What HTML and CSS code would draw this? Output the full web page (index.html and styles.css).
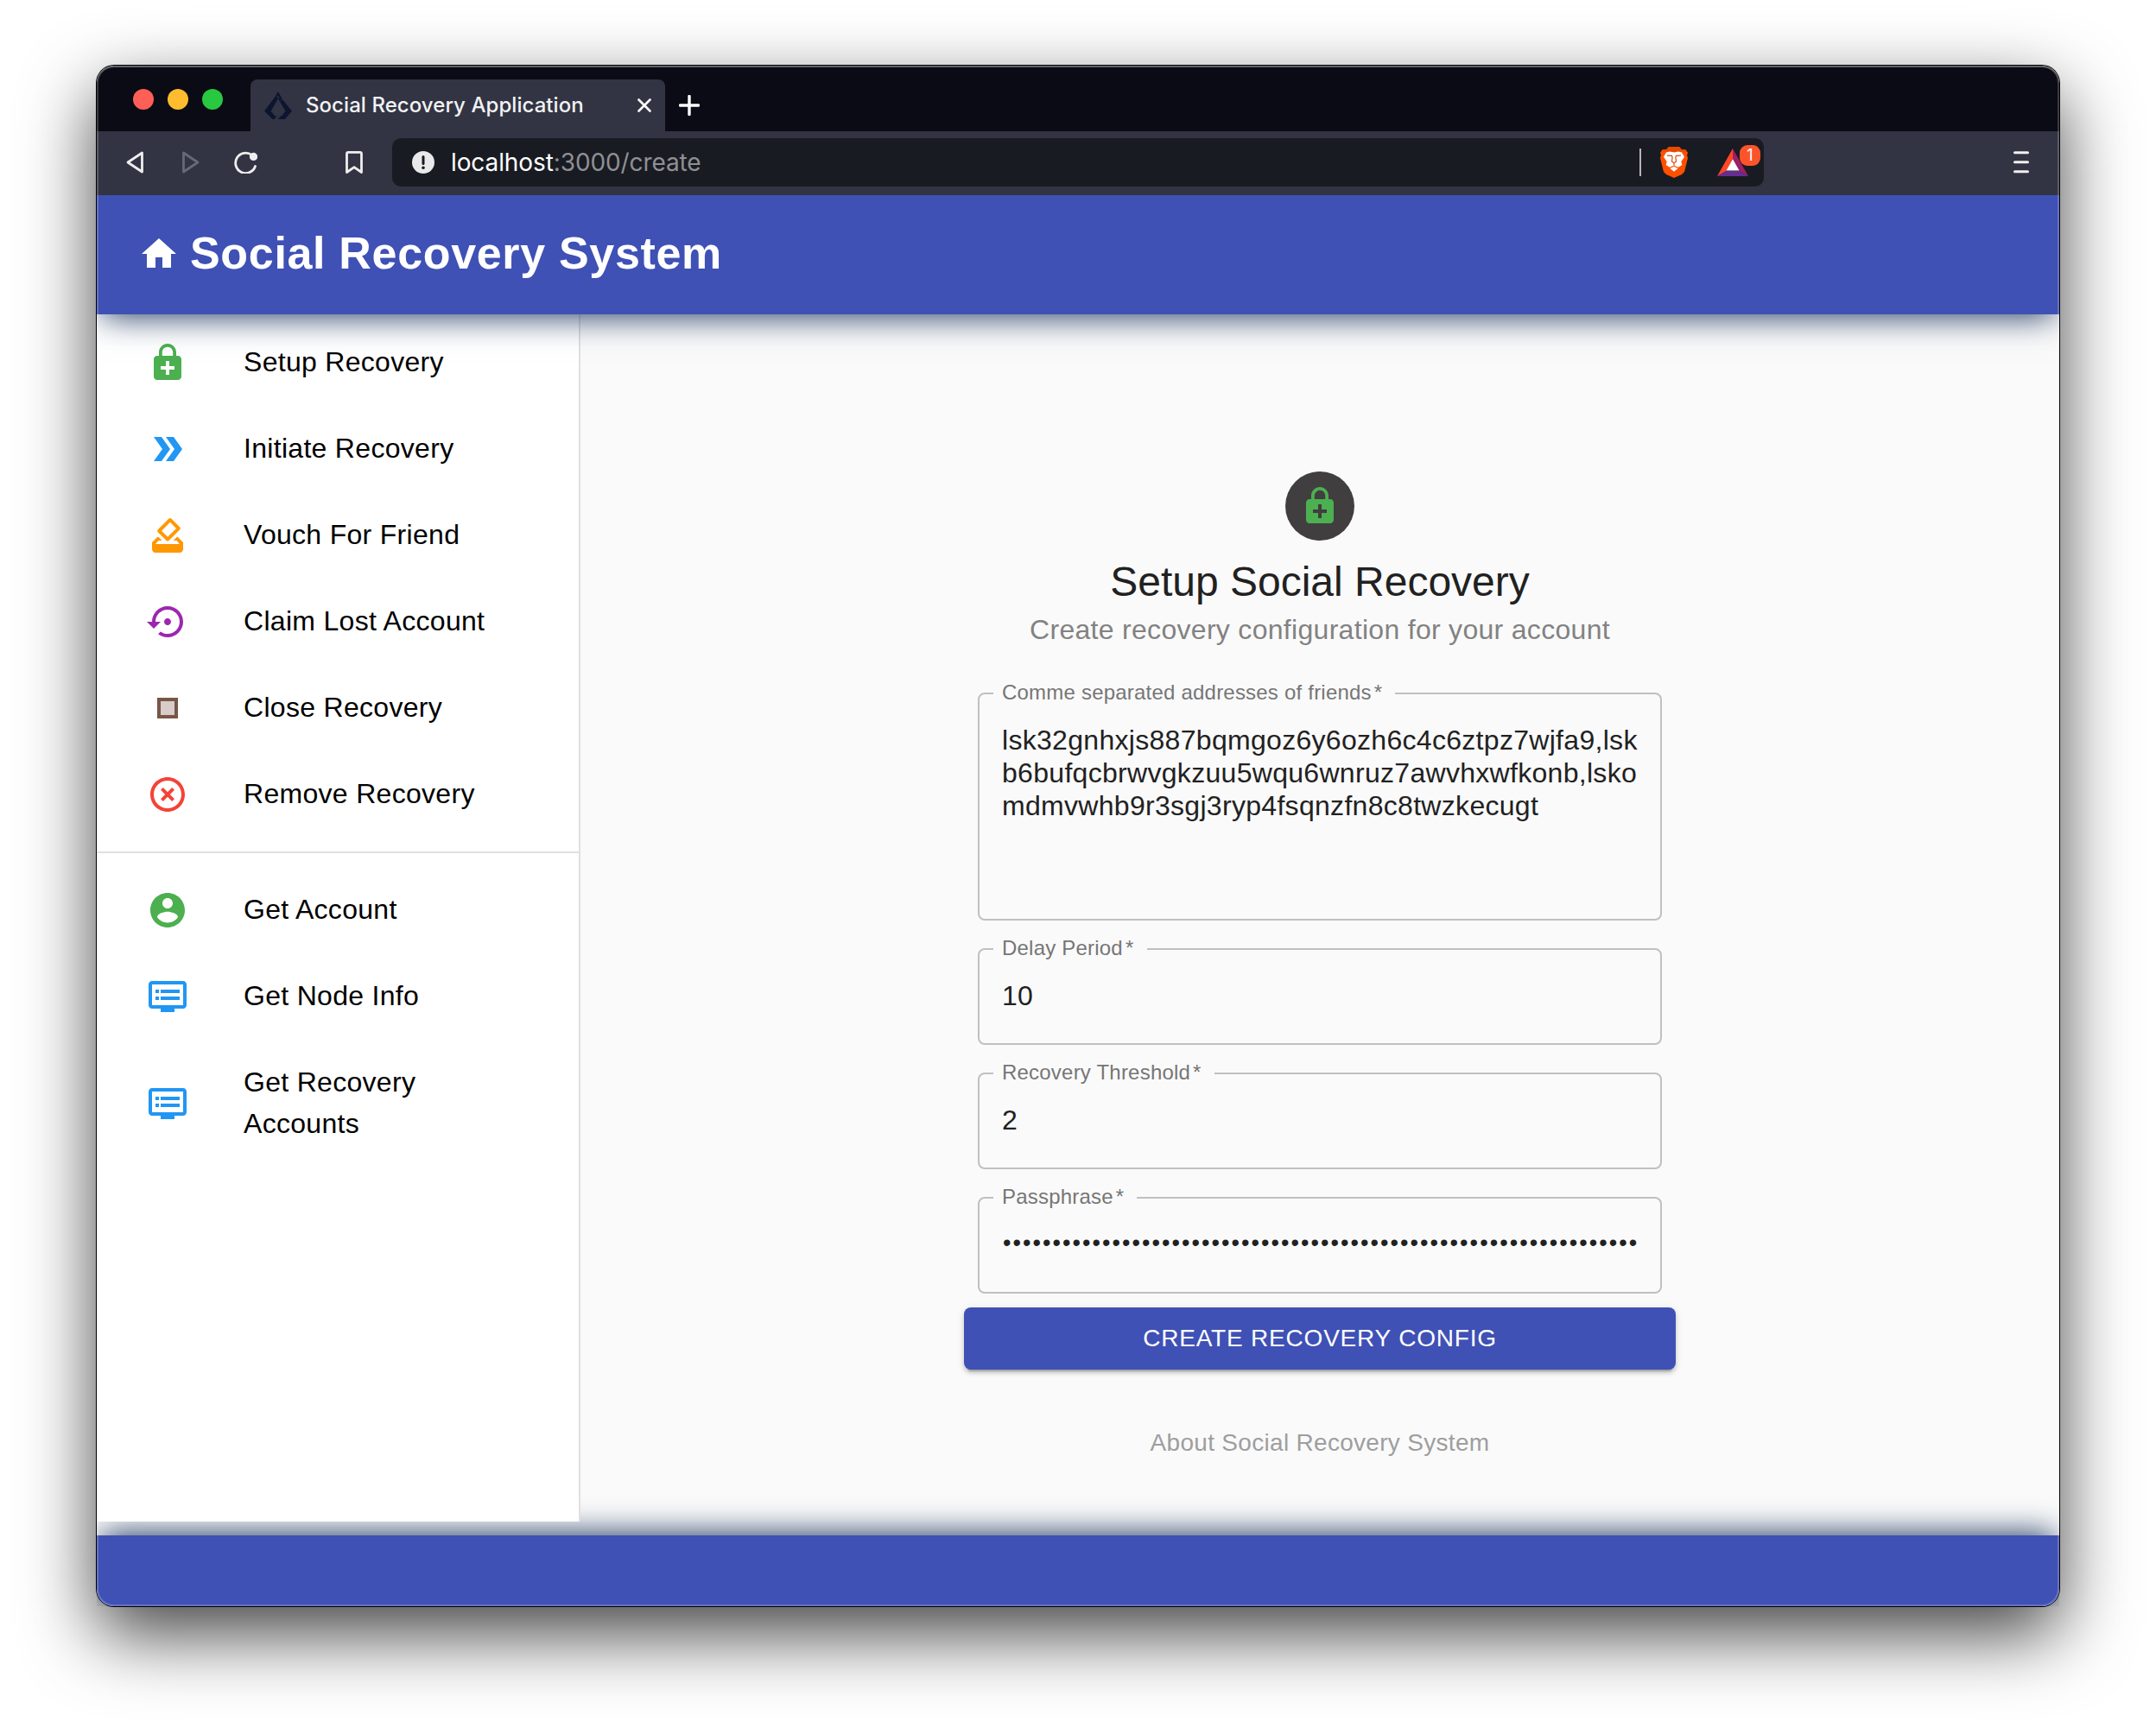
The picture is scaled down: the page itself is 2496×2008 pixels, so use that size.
FILE: index.html
```html
<!DOCTYPE html>
<html lang="en">
<head>
<meta charset="utf-8">
<title>Social Recovery Application</title>
<link rel="stylesheet" href="styles.css">
</head>
<body>
<div class="window">
  <div class="tabstrip">
    <div class="lights"><span class="light red"></span><span class="light yellow"></span><span class="light green"></span></div>
    <div class="tab">
      <svg class="favicon" viewBox="0 0 32 32"><path fill="#0c1530" d="M16 0l4.500 8.200-2.200 4-2.300-4.200-8.400 14.800 4.700 5.600h2.200L11.600 32H9.500L0 22.600 11.500 7.600zM13.700 4.500L16 8l2-1.200zM20.800 9L32 22.600 23.800 32h-8l3-3.600h1l4.700-5.600-6-10.400z"/></svg>
      <span class="tab-title">Social Recovery Application</span>
      <svg class="tab-close" viewBox="0 0 16 16"><path d="M1.500 1.500l13 13m0-13l-13 13" stroke="#fff" stroke-width="2.600" stroke-linecap="round"/></svg>
    </div>
    <svg class="tab-new" viewBox="0 0 24 24"><path d="M12 1.500v21M1.500 12h21" stroke="#fff" stroke-width="3.400" stroke-linecap="round"/></svg>
  </div>
  <div class="toolbar">
    <svg class="nav-back" viewBox="0 0 20 26"><path d="M18.500 2v22L2 13z" fill="none" stroke="#eee" stroke-width="2.800" stroke-linejoin="round"/></svg>
    <svg class="nav-forward" viewBox="0 0 20 26"><path d="M1.500 2v22L18 13z" fill="none" stroke="#676977" stroke-width="2.800" stroke-linejoin="round"/></svg>
    <svg class="nav-reload" viewBox="0 0 28 26"><path d="M25.500 17.500A11.700 11.700 0 1 1 21.500 4.500" fill="none" stroke="#eee" stroke-width="2.800" stroke-linecap="round"/><circle cx="23.500" cy="6.400" r="4.600" fill="#eee"/></svg>
    <svg class="nav-bookmark" viewBox="0 0 20 26"><path d="M1.500 24.500V3q0-1.600 1.600-1.600h13.800q1.600 0 1.600 1.600v21.500L10 18.700z" fill="none" stroke="#eee" stroke-width="2.800" stroke-linejoin="round"/></svg>
    <div class="address">
      <svg class="site-info" viewBox="0 0 26 26"><circle cx="13" cy="13" r="13" fill="#e9e9ea"/><path d="M13 6.500v8" stroke="#191b22" stroke-width="3" stroke-linecap="round"/><circle cx="13" cy="19.300" r="1.800" fill="#191b22"/></svg>
      <div class="url">localhost<span class="url-rest">:3000/create</span></div>
      <span class="separator"></span>
      <svg class="brave" viewBox="0 0 32 36"><path fill="#ff5000" d="M10 0h12l3 3.300 4-.3 3 3.800-1 3 1 3.200L28 29l-3 3-9 4-9-4-3-3L0 13l1-3.200-1-3L3 3l4 .3z"/><path fill="#e64a00" d="M10 0h12l3 3.300 4-.3 2 2.600-5-.3-10 1-10-1-5 .3L3 3l4 .3z"/><path fill="#fff" d="M7 6.500l4-1 5 1 5-1 4 1 3 5.200-3.700 5.300 1 4-4.300 2.800L16 21.500l-5 2.300L6.700 21l1-4L4 11.700zM16 22.800l4.600 2.200-4.600 3.800-4.600-3.800z"/><path fill="none" stroke="#d94a10" stroke-width="1.200" d="M8 10.200l5.500.2.600 1.600-.6 5 2.500 1.700 2.500-1.700-.6-5 .6-1.600 5.500-.2M16 19v2.500"/></svg>
      <div class="rewards">
        <svg class="bat" viewBox="0 0 36 32"><path fill="#ff4724" d="M18 0v11.500L10.500 26 0 32z"/><path fill="#9e1f63" d="M18 0v11.500L25.500 26 36 32z"/><path fill="#662d91" d="M0 32l10.500-6h15L36 32z"/><path fill="#fff" d="M18 12l7.500 13.500h-15z"/></svg>
        <span class="badge">1</span>
      </div>
    </div>
    <svg class="menu" viewBox="0 0 18 26"><path d="M1.500 1.800h15M1.500 12.800h15M1.500 23.800h15" stroke="#f0f0f0" stroke-width="3" stroke-linecap="round"/></svg>
  </div>

  <header class="app-bar">
    <svg class="icon white" viewBox="0 0 24 24"><path d="M10 20v-6h4v6h5v-8h3L12 3 2 12h3v8z"/></svg>
    <h1 class="brand">Social Recovery System</h1>
  </header>

  <div class="body">
    <nav class="sidebar">
      <ul class="list">
        <li class="item"><svg class="icon green" viewBox="0 0 24 24"><path d="M18 8h-1V6c0-2.760-2.240-5-5-5S7 3.240 7 6v2H6c-1.100 0-2 .9-2 2v10c0 1.100.9 2 2 2h12c1.100 0 2-.9 2-2V10c0-1.100-.9-2-2-2zM8.900 6c0-1.710 1.390-3.100 3.100-3.100s3.100 1.390 3.100 3.100v2H8.900V6zM16 16h-3v3h-2v-3H8v-2h3v-3h2v3h3v2z"/></svg><span class="text">Setup Recovery</span></li>
        <li class="item"><svg class="icon blue" viewBox="0 0 24 24"><path d="M15.500 5H11l5 7-5 7h4.500l5-7z"/><path d="M8.500 5H4l5 7-5 7h4.500l5-7z"/></svg><span class="text">Initiate Recovery</span></li>
        <li class="item"><svg class="icon orange" viewBox="0 0 24 24"><path d="M18 13h-.68l-2 2h1.910L19 17H5l1.780-2h2.050l-2-2H6l-3 3v4c0 1.100.89 2 1.990 2H19c1.100 0 2-.89 2-2v-4l-3-3zm-1-5.050l-4.950 4.950-3.540-3.540 4.950-4.950L17 7.950zm-4.240-5.660L6.390 8.660c-.39.39-.39 1.020 0 1.410l4.950 4.950c.39.39 1.020.39 1.410 0l6.360-6.360c.39-.39.39-1.020 0-1.410L14.160 2.300c-.38-.4-1.010-.4-1.400-.01z"/></svg><span class="text">Vouch For Friend</span></li>
        <li class="item"><svg class="icon purple" viewBox="0 0 24 24"><path d="M14 12c0-1.100-.9-2-2-2s-2 .9-2 2 .9 2 2 2 2-.9 2-2zm-2-9c-4.970 0-9 4.030-9 9H0l4 4 4-4H5c0-3.870 3.130-7 7-7s7 3.130 7 7-3.130 7-7 7c-1.510 0-2.910-.49-4.060-1.300l-1.420 1.440C8.040 20.300 9.940 21 12 21c4.970 0 9-4.030 9-9s-4.030-9-9-9z"/></svg><span class="text">Claim Lost Account</span></li>
        <li class="item"><svg class="icon brown" viewBox="0 0 24 24"><path d="M8 8h8v8H8z" opacity=".3"/><path d="M6 18h12V6H6v12zM8 8h8v8H8V8z"/></svg><span class="text">Close Recovery</span></li>
        <li class="item"><svg class="icon red-icon" viewBox="0 0 24 24"><path d="M14.590 8L12 10.590 9.410 8 8 9.410 10.590 12 8 14.590 9.410 16 12 13.410 14.590 16 16 14.590 13.410 12 16 9.410 14.590 8zM12 2C6.470 2 2 6.470 2 12s4.470 10 10 10 10-4.470 10-10S17.530 2 12 2zm0 18c-4.410 0-8-3.590-8-8s3.590-8 8-8 8 3.590 8 8-3.590 8-8 8z"/></svg><span class="text">Remove Recovery</span></li>
      </ul>
      <ul class="list divided">
        <li class="item"><svg class="icon green" viewBox="0 0 24 24"><path d="M12 2C6.480 2 2 6.480 2 12s4.480 10 10 10 10-4.480 10-10S17.520 2 12 2zm0 3c1.660 0 3 1.340 3 3s-1.340 3-3 3-3-1.340-3-3 1.340-3 3-3zm0 14.200c-2.500 0-4.710-1.280-6-3.220.03-1.990 4-3.080 6-3.080 1.990 0 5.970 1.090 6 3.080-1.290 1.940-3.500 3.220-6 3.220z"/></svg><span class="text">Get Account</span></li>
        <li class="item"><svg class="icon blue" viewBox="0 0 24 24"><path d="M21 3H3c-1.100 0-2 .9-2 2v12c0 1.100.9 2 2 2h5v2h8v-2h5c1.100 0 1.990-.9 1.990-2L23 5c0-1.100-.9-2-2-2zm0 14H3V5h18v12zm-2-9H8v2h11V8zm0 4H8v2h11v-2zM7 8H5v2h2V8zm0 4H5v2h2v-2z"/></svg><span class="text">Get Node Info</span></li>
        <li class="item"><svg class="icon blue" viewBox="0 0 24 24"><path d="M21 3H3c-1.100 0-2 .9-2 2v12c0 1.100.9 2 2 2h5v2h8v-2h5c1.100 0 1.990-.9 1.990-2L23 5c0-1.100-.9-2-2-2zm0 14H3V5h18v12zm-2-9H8v2h11V8zm0 4H8v2h11v-2zM7 8H5v2h2V8zm0 4H5v2h2v-2z"/></svg><span class="text">Get Recovery Accounts</span></li>
      </ul>
    </nav>

    <main class="main">
      <div class="avatar"><svg class="icon green" viewBox="0 0 24 24"><path d="M18 8h-1V6c0-2.760-2.240-5-5-5S7 3.240 7 6v2H6c-1.100 0-2 .9-2 2v10c0 1.100.9 2 2 2h12c1.100 0 2-.9 2-2V10c0-1.100-.9-2-2-2zM8.900 6c0-1.710 1.390-3.100 3.100-3.100s3.100 1.390 3.100 3.100v2H8.900V6zM16 16h-3v3h-2v-3H8v-2h3v-3h2v3h3v2z"/></svg></div>
      <h2 class="title">Setup Social Recovery</h2>
      <p class="subtitle">Create recovery configuration for your account</p>
      <fieldset class="field tall">
        <legend class="label">Comme separated addresses of friends<span class="star">*</span></legend>
        <div class="value addresses">lsk32gnhxjs887bqmgoz6y6ozh6c4c6ztpz7wjfa9,lsk<br>b6bufqcbrwvgkzuu5wqu6wnruz7awvhxwfkonb,lsko<br>mdmvwhb9r3sgj3ryp4fsqnzfn8c8twzkecugt</div>
      </fieldset>
      <fieldset class="field">
        <legend class="label">Delay Period<span class="star">*</span></legend>
        <div class="value">10</div>
      </fieldset>
      <fieldset class="field">
        <legend class="label">Recovery Threshold<span class="star">*</span></legend>
        <div class="value">2</div>
      </fieldset>
      <fieldset class="field">
        <legend class="label">Passphrase<span class="star">*</span></legend>
        <div class="value dots">••••••••••••••••••••••••••••••••••••••••••••••••••••••••••••••••</div>
      </fieldset>
      <button class="submit">CREATE RECOVERY CONFIG</button>
      <p class="about">About Social Recovery System</p>
    </main>
  </div>
  <footer class="footer"></footer>
</div>
</body>
</html>
```

FILE: styles.css
```css
* { box-sizing: border-box; }

body {
  margin: 0;
  height: 2008px;
  padding: 76px 112px 148px;
  background: #fff;
  overflow: hidden;
  font-family: "Liberation Sans", Arial, sans-serif;
  letter-spacing: 0.3px;
}

svg { display: block; flex: none; }
h1, h2, p, ul { margin: 0; padding: 0; font-weight: 400; }

/* Desktop window */
.window {
  position: relative;
  display: flex;
  flex-direction: column;
  width: 2272px;
  height: 1784px;
  border-radius: 20px;
  background: #fafafa;
  box-shadow: 0 0 0 1px #000, 0 32px 84px rgba(0, 0, 0, 0.74);
  clip-path: inset(-76px -112px -148px);
}
.window::after {
  content: "";
  position: absolute;
  inset: 0;
  z-index: 5;
  border-radius: 20px;
  box-shadow: inset 0 0 0 2px rgba(255, 255, 255, 0.2), inset 0 2px 0 rgba(255, 255, 255, 0.2);
  pointer-events: none;
}

.tabstrip {
  display: flex;
  height: 76px;
  padding-left: 42px;
  background: #0b0b15;
  border-radius: 20px 20px 0 0;
}
.lights { display: flex; gap: 16px; padding-top: 27px; width: 136px; }
.light { width: 24px; height: 24px; border-radius: 50%; }
.red { background: #ff5f57; }
.yellow { background: #febc2e; }
.green { background: #28c840; }

.tab {
  display: flex;
  align-items: center;
  width: 480px;
  height: 60px;
  margin-top: 16px;
  padding: 0 16px;
  background: #323443;
  border-radius: 8px 8px 0 0;
}
.favicon { width: 32px; height: 32px; }
.tab-title {
  flex: 1;
  margin-left: 16px;
  color: #f2f2f4;
  font: 500 24px/32px Inter, sans-serif;
  letter-spacing: 0.06px;
  white-space: nowrap;
}
.tab-close { width: 16px; height: 16px; }
.tab-new { width: 24px; height: 24px; margin: 34px 0 0 16px; }

.toolbar {
  display: flex;
  align-items: center;
  height: 74px;
  padding: 0 35px 2px 34px;
  background: #323443;
}
.nav-back { width: 20px; height: 26px; margin-right: 45px; }
.nav-forward { width: 20px; height: 26px; margin-right: 39px; }
.nav-reload { width: 28px; height: 26px; margin-right: 102px; }
.nav-bookmark { width: 20px; height: 26px; margin-right: 34px; }
.menu { width: 18px; height: 26px; margin-left: auto; }

.address {
  display: flex;
  align-items: center;
  width: 1588px;
  height: 56px;
  padding: 0 4px 0 23px;
  background: #191b22;
  border-radius: 10px;
}
.site-info { width: 26px; height: 26px; }
.url {
  flex: 1;
  margin-left: 19px;
  color: #fff;
  font: 400 28px/36px Inter, sans-serif;
  letter-spacing: -0.1px;
}
.url-rest { color: #8f9094; }
.separator { width: 2px; height: 32px; background: #b4b5b8; }
.brave { width: 32px; height: 36px; margin: 0 34px 0 22px; }
.rewards { position: relative; width: 50px; height: 32px; }
.bat { width: 36px; height: 32px; }
.badge {
  position: absolute;
  top: -4px;
  right: 0;
  width: 24px;
  height: 24px;
  border-radius: 9px;
  background: #fb542b;
  color: #fff;
  font: 400 18px/24px Inter, sans-serif;
  text-align: center;
}

/* Application */
.app-bar {
  position: relative;
  z-index: 3;
  display: flex;
  align-items: center;
  height: 138px;
  padding: 0 48px 2px;
  background: #3f51b5;
  box-shadow: 0 8px 36px -6px rgb(30, 55, 95);
  clip-path: inset(0 0 -80px);
}
.brand {
  margin: 0 0 2px 12px;
  color: #fff;
  font-size: 52px;
  font-weight: 700;
  line-height: 62px;
  letter-spacing: 0.67px;
}

.icon { width: 48px; height: 48px; }
.icon.white { fill: #fff; }
.icon.green { fill: #4caf50; background: none; }
.icon.blue { fill: #2196f3; }
.icon.orange { fill: #ff9800; }
.icon.purple { fill: #9c27b0; }
.icon.brown { fill: #795548; }
.icon.red-icon { fill: #f44336; }

.body { display: flex; height: 1414px; align-items: flex-start; }
.sidebar {
  position: relative;
  z-index: 2;
  width: 560px;
  height: 1398px;
  padding-top: 6px;
  background: #fff;
  border-right: 2px solid #e0e0e0;
}
.list { padding-bottom: 16px; list-style: none; }
.divided { padding-top: 16px; border-top: 2px solid #e0e0e0; }
.item {
  display: flex;
  align-items: center;
  padding: 26px 32px 26px 58px;
  color: #000;
  font-size: 32px;
  line-height: 48px;
}
.text { width: 280px; margin-left: 64px; transform: translateY(-1px); }

.main {
  flex: 1;
  display: flex;
  flex-direction: column;
  align-items: center;
  padding-top: 182px;
}
.avatar {
  display: grid;
  place-items: center;
  width: 80px;
  height: 80px;
  border-radius: 50%;
  background: #413e3f;
}
.title {
  margin-top: 16px;
  color: #212121;
  font-size: 48px;
  line-height: 64px;
  letter-spacing: 0;
}
.subtitle {
  margin: -1px 0 49px;
  color: #828282;
  font-size: 32px;
  line-height: 48px;
}

.field {
  width: 792px;
  height: 112px;
  margin: 0 0 32px;
  padding: 0 16px;
  border: 2px solid #c0c0c0;
  border-radius: 8px;
}
.field.tall { height: 264px; }
.label {
  height: 2px;
  padding: 0 15px 0 10px;
  color: #767676;
  font-size: 24px;
  line-height: 0;
  letter-spacing: 0.21px;
  white-space: nowrap;
}
.star { margin-left: 3px; }
.value {
  padding: 34px 0 0 10px;
  color: #212121;
  font-size: 32px;
  line-height: 38px;
  white-space: nowrap;
}
.value.dots {
  padding: 32px 0 0 11px;
  font-size: 27px;
  letter-spacing: 2.05px;
}

.submit {
  width: 824px;
  height: 72px;
  margin-top: -16px;
  padding: 0;
  border: 0;
  border-radius: 8px;
  background: #3f51b5;
  color: #fff;
  font: 400 28px/48px "Liberation Sans", Arial, sans-serif;
  letter-spacing: 0.8px;
  box-shadow: 0 6px 2px -4px rgba(0, 0, 0, 0.2), 0 4px 4px rgba(0, 0, 0, 0.14), 0 2px 10px rgba(0, 0, 0, 0.12);
}
.about {
  margin-top: 65px;
  color: #9e9e9e;
  font-size: 28px;
  line-height: 40px;
}

.footer {
  position: relative;
  z-index: 1;
  height: 82px;
  background: #3f51b5;
  border-radius: 0 0 20px 20px;
  box-shadow: 0 -8px 36px -6px rgb(30, 55, 95);
  clip-path: inset(-80px 0 0);
}
```
